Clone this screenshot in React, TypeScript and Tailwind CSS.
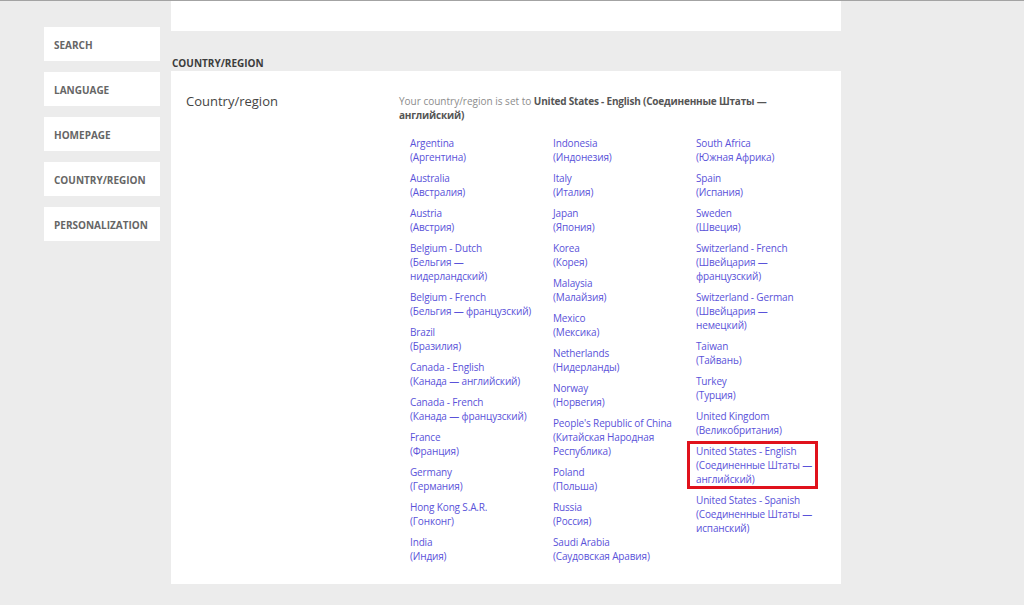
import React from "react";

type Item = { lines: string[]; selected?: boolean };

const col1: Item[] = [
  { lines: ["Argentina", "(Аргентина)"] },
  { lines: ["Australia", "(Австралия)"] },
  { lines: ["Austria", "(Австрия)"] },
  { lines: ["Belgium - Dutch", "(Бельгия —", "нидерландский)"] },
  { lines: ["Belgium - French", "(Бельгия — французский)"] },
  { lines: ["Brazil", "(Бразилия)"] },
  { lines: ["Canada - English", "(Канада — английский)"] },
  { lines: ["Canada - French", "(Канада — французский)"] },
  { lines: ["France", "(Франция)"] },
  { lines: ["Germany", "(Германия)"] },
  { lines: ["Hong Kong S.A.R.", "(Гонконг)"] },
  { lines: ["India", "(Индия)"] },
];

const col2: Item[] = [
  { lines: ["Indonesia", "(Индонезия)"] },
  { lines: ["Italy", "(Италия)"] },
  { lines: ["Japan", "(Япония)"] },
  { lines: ["Korea", "(Корея)"] },
  { lines: ["Malaysia", "(Малайзия)"] },
  { lines: ["Mexico", "(Мексика)"] },
  { lines: ["Netherlands", "(Нидерланды)"] },
  { lines: ["Norway", "(Норвегия)"] },
  { lines: ["People's Republic of China", "(Китайская Народная", "Республика)"] },
  { lines: ["Poland", "(Польша)"] },
  { lines: ["Russia", "(Россия)"] },
  { lines: ["Saudi Arabia", "(Саудовская Аравия)"] },
];

const col3: Item[] = [
  { lines: ["South Africa", "(Южная Африка)"] },
  { lines: ["Spain", "(Испания)"] },
  { lines: ["Sweden", "(Швеция)"] },
  { lines: ["Switzerland - French", "(Швейцария —", "французский)"] },
  { lines: ["Switzerland - German", "(Швейцария —", "немецкий)"] },
  { lines: ["Taiwan", "(Тайвань)"] },
  { lines: ["Turkey", "(Турция)"] },
  { lines: ["United Kingdom", "(Великобритания)"] },
  { lines: ["United States - English", "(Соединенные Штаты —", "английский)"], selected: true },
  { lines: ["United States - Spanish", "(Соединенные Штаты —", "испанский)"] },
];

const nav = ["SEARCH", "LANGUAGE", "HOMEPAGE", "COUNTRY/REGION", "PERSONALIZATION"];

function Column({ items }: { items: Item[] }) {
  return (
    <div className="flex flex-col gap-[7px]">
      {items.map((it, i) => (
        <div key={i} className="relative">
          {it.lines.map((l, j) => (
            <div
              key={j}
              className="h-[14px] leading-[14px] whitespace-nowrap text-[#5a52d9] tracking-[-0.15px]"
            >
              {l}
            </div>
          ))}
          {it.selected && (
            <div className="absolute left-[-9px] top-[-3px] w-[131px] h-[48px] border-[3px] border-[#e0121c]" />
          )}
        </div>
      ))}
    </div>
  );
}

export default function App() {
  return (
    <div
      className="w-full h-[605px] bg-[#ececec] border-t border-[#a3a3a3] overflow-hidden"
      style={{ fontFamily: '"Open Sans", "Noto Sans", sans-serif' }}
    >
      <div className="flex">
        <div className="ml-[44px] w-[116px] pt-[26px] flex flex-col gap-[11px]">
          {nav.map((n) => (
            <div
              key={n}
              className="h-[34px] bg-white pl-[10px] pt-[2px] flex items-center text-[10px] font-bold text-[#666666]"
            >
              {n}
            </div>
          ))}
        </div>
        <div className="ml-[11px] w-[670px] flex flex-col">
          <div className="h-[30px] bg-white" />
          <div className="h-[40px] flex items-end pb-[1px] pl-[1px] text-[10px] font-bold text-[#3c3c3c] leading-[14px]">
            COUNTRY/REGION
          </div>
          <div className="h-[513px] bg-white flex pt-[23px] pl-[15px]">
            <div className="w-[213px] text-[13px] leading-[14px] text-[#444444]">Country/region</div>
            <div className="flex flex-col text-[10px]">
              <div className="leading-[14px] text-[#8c8c8c]">
                Your country/region is set to{" "}
                <span className="font-bold text-[#555555] tracking-[-0.2px]">
                  United States - English (Соединенные Штаты —
                </span>
                <br />
                <span className="font-bold text-[#555555] tracking-[-0.2px]">английский)</span>
              </div>
              <div className="mt-[14px] ml-[11px] grid grid-cols-[143px_143px_143px]">
                <Column items={col1} />
                <Column items={col2} />
                <Column items={col3} />
              </div>
            </div>
          </div>
        </div>
      </div>
    </div>
  );
}
